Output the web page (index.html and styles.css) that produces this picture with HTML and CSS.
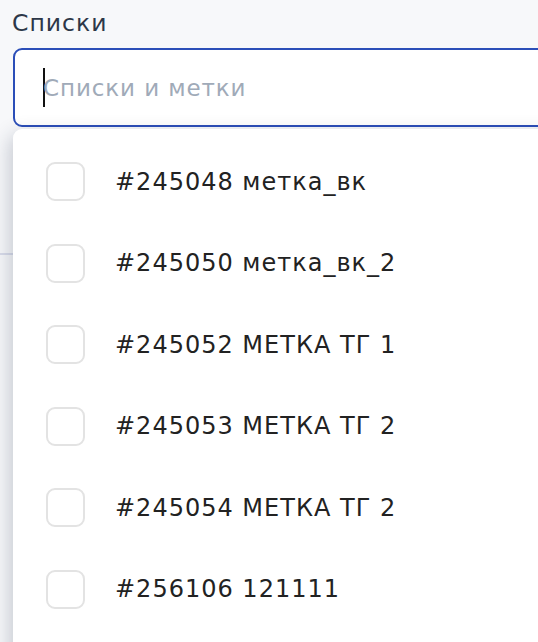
FILE: index.html
```html
<!DOCTYPE html>
<html lang="ru">
<head>
<meta charset="utf-8">
<link rel="stylesheet" href="styles.css">
</head>
<body>
<div class="page">
  <div class="label">Списки</div>
  <div class="field">
    <div class="input"><span class="caret"></span><span class="placeholder">Списки и метки</span></div>
    <div class="behind"></div>
    <ul class="menu">
      <li class="item"><span class="box"></span><span class="text">#245048 метка_вк</span></li>
      <li class="item"><span class="box"></span><span class="text">#245050 метка_вк_2</span></li>
      <li class="item"><span class="box"></span><span class="text">#245052 МЕТКА ТГ 1</span></li>
      <li class="item"><span class="box"></span><span class="text">#245053 МЕТКА ТГ 2</span></li>
      <li class="item"><span class="box"></span><span class="text">#245054 МЕТКА ТГ 2</span></li>
      <li class="item"><span class="box"></span><span class="text">#256106 121111</span></li>
    </ul>
  </div>
</div>
</body>
</html>
```
FILE: styles.css
```css
html, body {
  margin: 0;
  padding: 0;
  height: 100%;
  overflow: hidden;
  background: #f7f8fa;
  font-family: "DejaVu Sans", "Noto Sans", sans-serif;
}
.page {
  padding: 8px 0 0 12px;
}
.label {
  font-size: 23.5px;
  letter-spacing: 1px;
  line-height: 30px;
  color: #2d3748;
  margin-bottom: 10px;
}
.field {
  position: relative;
  margin-left: 1px;
  margin-right: -30px;
}
.input {
  height: 75px;
  border: 2px solid #2b4eb8;
  border-radius: 9px;
  background: #fff;
  display: flex;
  align-items: center;
  padding-left: 28px;
  position: relative;
  z-index: 2;
}
.caret {
  width: 2px;
  height: 39px;
  background: #111;
}
.placeholder {
  font-size: 23px;
  letter-spacing: 0.9px;
  color: #a0aab8;
  margin-left: -2px;
}
.behind {
  height: 126px;
  margin-left: -13px;
  border-bottom: 2px solid #d9dcea;
  background: #f7f8fa;
}
.menu {
  position: absolute;
  top: 81px;
  left: 0;
  right: 0;
  height: 640px;
  margin: 0;
  padding: 12px 0 0 0;
  list-style: none;
  background: #fff;
  border-radius: 9px 9px 0 0;
  box-shadow: -3px 6px 20px rgba(30, 40, 70, 0.24);
  z-index: 3;
}
.item {
  height: 81.5px;
  display: flex;
  align-items: center;
  padding-left: 33px;
}
.box {
  width: 35px;
  height: 35px;
  border: 2px solid #e3e3e3;
  border-radius: 9px;
  flex: none;
}
.text {
  margin-left: 30px;
  font-size: 24px;
  letter-spacing: 1px;
  color: #222;
}
```
